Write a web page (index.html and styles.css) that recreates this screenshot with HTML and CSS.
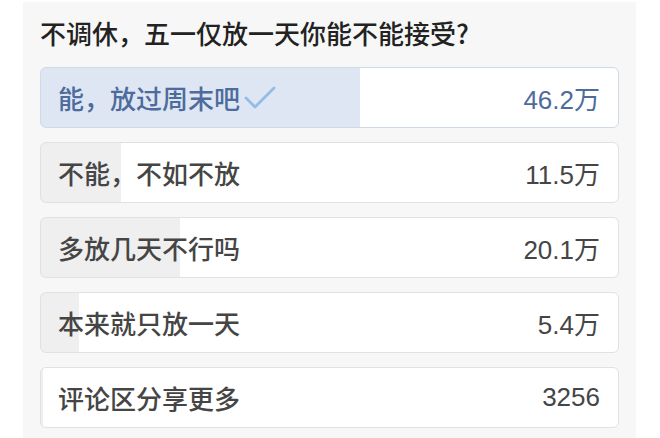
FILE: index.html
```html
<!DOCTYPE html>
<html lang="zh-CN">
  <head>
    <meta charset="UTF-8" />
    <meta name="viewport" content="width=device-width, initial-scale=1.0" />
    <title>投票</title>
    <link rel="stylesheet" href="styles.css">
  </head>
  <body>
    <section class="poll">
      <h2 class="question">不调休，五一仅放一天你能不能接受?</h2>
      <div class="options">
        <div class="option chosen" style="--pct: 55.3%">
          <span class="label">能，放过周末吧
            <svg class="check" width="32" height="24" viewBox="0 0 32 24">
              <path d="M2 12 L11 21 L30 2" fill="none" stroke="#95bce9" stroke-width="2.8" stroke-linecap="round" stroke-linejoin="round" />
            </svg>
          </span>
          <span class="count">46.2万</span>
        </div>
        <div class="option" style="--pct: 13.8%">
          <span class="label">不能，不如不放</span>
          <span class="count">11.5万</span>
        </div>
        <div class="option" style="--pct: 24.1%">
          <span class="label">多放几天不行吗</span>
          <span class="count">20.1万</span>
        </div>
        <div class="option" style="--pct: 6.5%">
          <span class="label">本来就只放一天</span>
          <span class="count">5.4万</span>
        </div>
        <div class="option" style="--pct: 0.4%">
          <span class="label">评论区分享更多</span>
          <span class="count">3256</span>
        </div>
      </div>
    </section>
  </body>
</html>
```

FILE: styles.css
```css
body {
  margin: 0;
  padding: 0;
  background-color: white;
  font-family: "Liberation Sans", "Noto Sans CJK SC", sans-serif;
}
.poll {
  margin: 2px 24px 0 23px;
  padding: 13px 17px 20px 17px;
  background-color: #f7f7f7;
}
.question {
  margin: 0 0 16px 0;
  font-size: 26px;
  line-height: 36px;
  font-weight: 500;
  color: #222;
  font-family: "Noto Sans CJK SC", sans-serif;
}
.options {
  display: flex;
  flex-direction: column;
  gap: 14px;
}
.option {
  --fill: #efefef;
  height: 61px;
  box-sizing: border-box;
  border: 1px solid #e1e1e1;
  border-radius: 6px;
  padding: 0 18px 0 17px;
  display: flex;
  justify-content: space-between;
  align-items: center;
  background: linear-gradient(to right, var(--fill) var(--pct), white var(--pct));
  color: #454545;
  font-size: 26px;
}
.chosen {
  --fill: #dde6f2;
  border-color: #cfdae7;
  color: #4d6b9c;
}
.label {
  display: flex;
  align-items: center;
  font-weight: 500;
  font-family: "Noto Sans CJK SC", sans-serif;
}
.check {
  margin-left: 4px;
}
.count {
  font-size: 26px;
}
```
